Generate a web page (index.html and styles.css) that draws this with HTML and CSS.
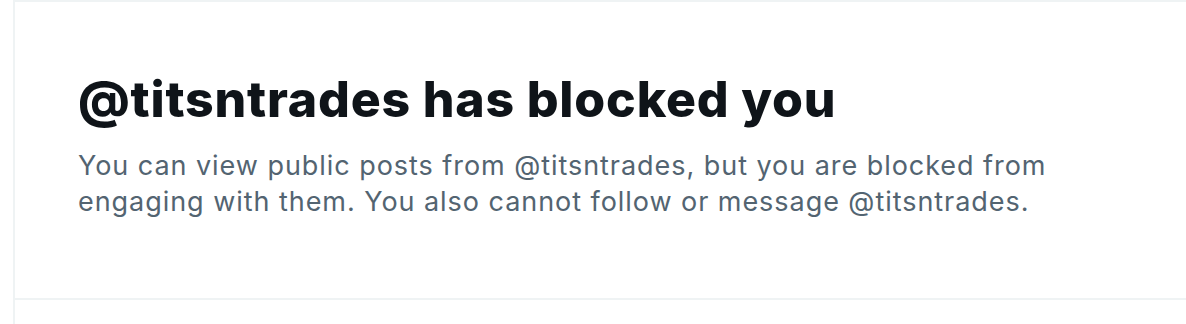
FILE: index.html
```html
<!DOCTYPE html>
<html>
<head>
<meta charset="utf-8">
<link rel="stylesheet" href="styles.css">
</head>
<body>
<div class="page">
  <div class="column">
    <section class="empty">
      <h1 class="title">@titsntrades has blocked you</h1>
      <p class="desc">You can view public posts from @titsntrades, but you are blocked from engaging with them. You also cannot follow or message @titsntrades.</p>
    </section>
    <div class="rest"></div>
  </div>
</div>
</body>
</html>
```

FILE: styles.css
```css
html, body {
  margin: 0;
  padding: 0;
  background: #ffffff;
}
.page {
  display: flex;
  height: 324px;
  padding-left: 13px;
}
.column {
  flex: 1;
  border-left: 2px solid #eff3f4;
  border-top: 2px solid #eff3f4;
  display: flex;
  flex-direction: column;
}
.empty {
  height: 298px;
  box-sizing: border-box;
  border-bottom: 2px solid #eff3f4;
  padding: 67px 64px 0 63px;
}
.title {
  margin: 0;
  font-family: Inter, "Liberation Sans", sans-serif;
  font-weight: 800;
  font-size: 50px;
  line-height: 60px;
  letter-spacing: 0.8px;
  color: #0f1419;
}
.desc {
  margin: 19px 0 0;
  max-width: 1000px;
  font-family: Inter, "Liberation Sans", sans-serif;
  font-weight: 400;
  font-size: 27px;
  line-height: 36px;
  letter-spacing: 0.95px;
  color: #536471;
}
.rest {
  flex: 1;
}
```
